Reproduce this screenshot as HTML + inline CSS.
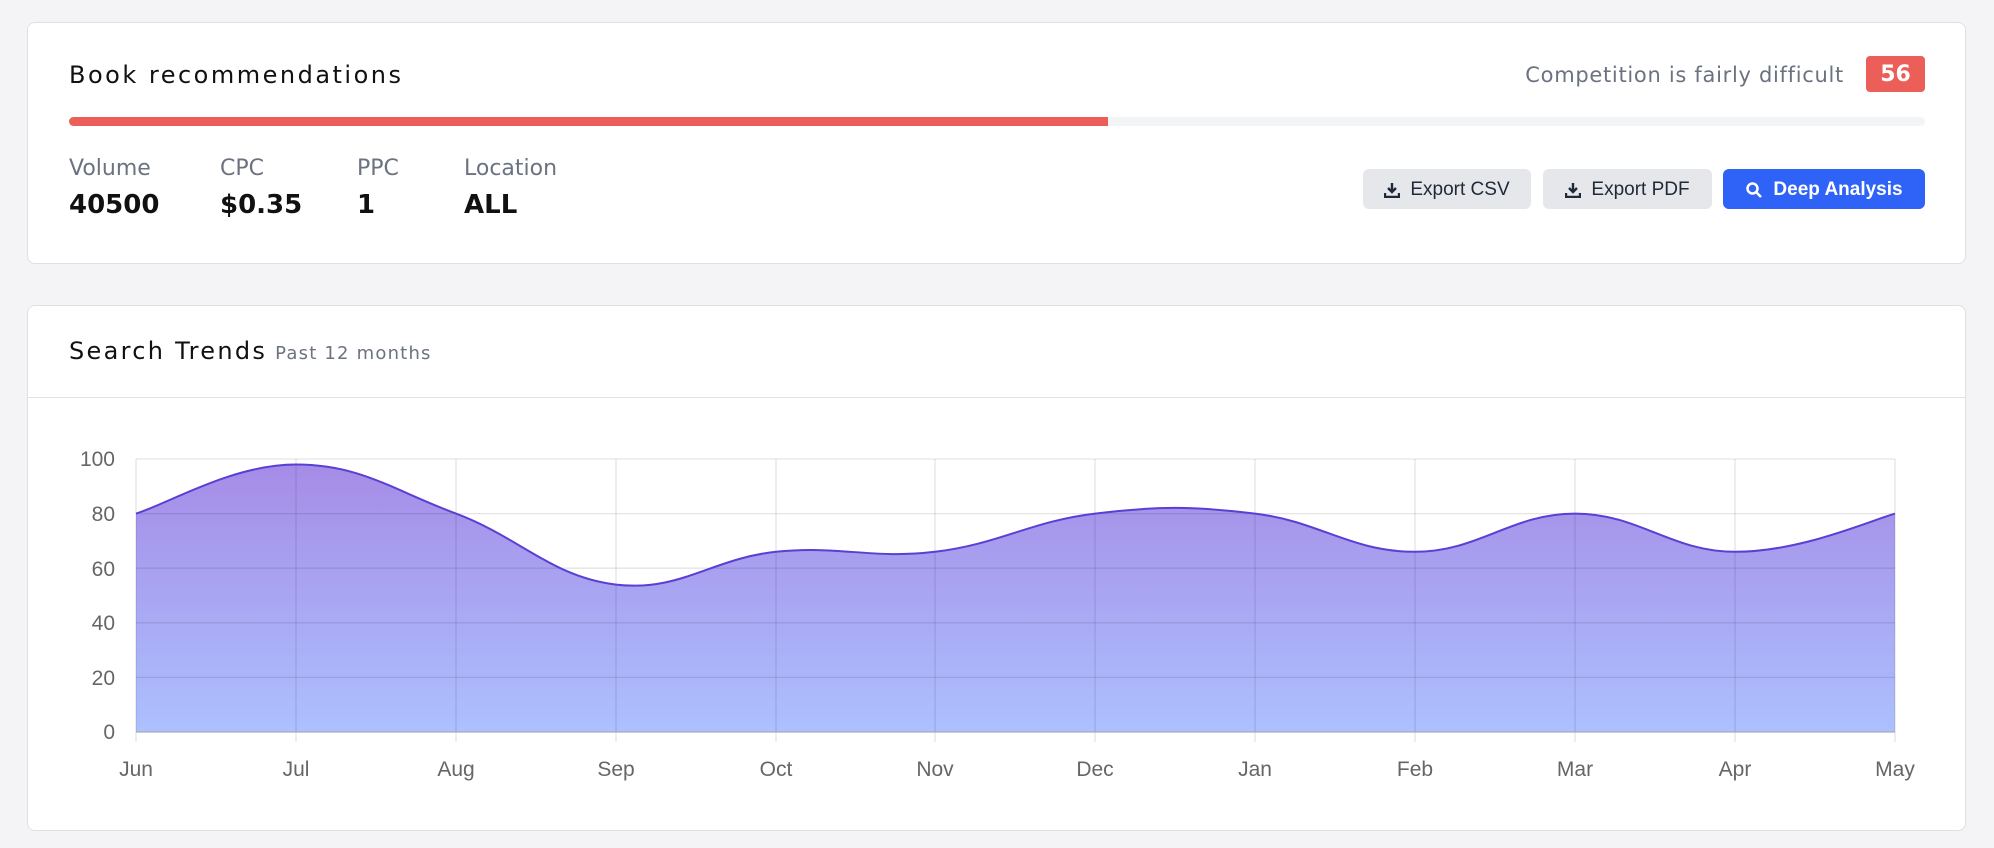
<!DOCTYPE html>
<html><head><meta charset="utf-8"><style>
body{margin:0;width:1994px;height:848px;background:#f4f4f6;font-family:"Liberation Sans",sans-serif;position:relative;overflow:hidden}
.pp{font-family:"DejaVu Sans","Liberation Sans",sans-serif}
.card{position:absolute;left:27px;width:1937px;background:#fff;border:1px solid #e0e0e4;border-radius:8px}
.abs{position:absolute}
.lab{color:#6b7280;font-size:22px;top:156px}
.val{color:#111;font-size:26px;font-weight:bold;top:190px}
.btn{position:absolute;top:169px;height:40px;border-radius:6px;background:#e5e7eb;color:#1f2937;font-size:19px;display:flex;align-items:center;justify-content:center;gap:10px}
</style></head><body>
<div class="card" style="top:22px;height:240px"></div>
<div class="abs pp" style="left:69px;top:61px;font-size:24px;color:#111;letter-spacing:2.5px">Book recommendations</div>
<div class="abs pp" style="right:150px;top:63px;font-size:21px;color:#6b7280;letter-spacing:0.7px">Competition is fairly difficult</div>
<div class="abs pp" style="left:1866px;top:56px;width:59px;height:36px;background:#ec5f58;border-radius:4px;color:#fff;font-weight:bold;font-size:22px;text-align:center;line-height:38px">56</div>
<div class="abs" style="left:69px;top:117px;width:1856px;height:9px;background:#f3f4f6;border-radius:5px"></div>
<div class="abs" style="left:69px;top:117px;width:1039px;height:9px;background:#ec5f58;border-radius:5px 0 0 5px"></div>
<div class="abs lab pp" style="left:69px">Volume</div><div class="abs val pp" style="left:69px">40500</div>
<div class="abs lab pp" style="left:220px">CPC</div><div class="abs val pp" style="left:220px">$0.35</div>
<div class="abs lab pp" style="left:357px">PPC</div><div class="abs val pp" style="left:357px">1</div>
<div class="abs lab pp" style="left:464px">Location</div><div class="abs val pp" style="left:464px">ALL</div>
<div class="btn" style="left:1363px;width:168px;padding-top:2px;box-sizing:border-box"><svg width="16" height="16" viewBox="0 0 16 16"><path d="M8 1v9M4 6l4 4 4-4M1 11v4h14v-4" stroke="#1f2937" stroke-width="2.4" fill="none"/></svg>Export CSV</div>
<div class="btn" style="left:1543px;width:169px;padding-top:2px;box-sizing:border-box"><svg width="16" height="16" viewBox="0 0 16 16"><path d="M8 1v9M4 6l4 4 4-4M1 11v4h14v-4" stroke="#1f2937" stroke-width="2.4" fill="none"/></svg>Export PDF</div>
<div class="btn" style="left:1723px;width:202px;background:#2f62f6;color:#fff;font-weight:bold;padding-top:2px;box-sizing:border-box"><svg width="18" height="18" viewBox="0 0 18 18"><circle cx="7.5" cy="7.5" r="5" stroke="#fff" stroke-width="2.5" fill="none"/><path d="M11 11l5 5" stroke="#fff" stroke-width="2.5"/></svg>Deep Analysis</div>

<div class="card" style="top:305px;height:524px"></div>
<div class="abs" style="left:27px;top:397px;width:1939px;height:1px;background:#e3e3e6"></div>
<div class="abs pp" style="left:69px;top:337px;font-size:24px;color:#111;letter-spacing:2.3px">Search Trends<span style="font-size:18px;color:#6b7280;letter-spacing:1.2px;margin-left:8px">Past 12 months</span></div>
<svg class="abs" style="left:0;top:0" width="1994" height="848">
<defs><linearGradient id="g" x1="0" y1="459" x2="0" y2="732" gradientUnits="userSpaceOnUse"><stop offset="0" stop-color="#a58be6"/><stop offset="1" stop-color="#acc0fe"/></linearGradient></defs>
<path d="M136 513.6C168 503.8 232 464.5 296 464.5C360 464.5 392 489.6 456 513.6C520 537.6 552 577 616 584.6C680 592.2 712 558.4 776 551.8C840 545.2 871 559.4 935 551.8C999 544.2 1031 521.2 1095 513.6C1159 506 1191 506 1255 513.6C1319 521.2 1351 551.8 1415 551.8C1479 551.8 1511 513.6 1575 513.6C1639 513.6 1671 551.8 1735 551.8C1799 551.8 1863 523.4 1895 513.6L1895 732L136 732Z" fill="url(#g)"/>
<g stroke="#000" stroke-opacity="0.1" stroke-width="1.3">
<path d="M136 459H1895M136 513.6H1895M136 568.2H1895M136 622.8H1895M136 677.4H1895"/>
<path d="M136 459V742M296 459V742M456 459V742M616 459V742M776 459V742M935 459V742M1095 459V742M1255 459V742M1415 459V742M1575 459V742M1735 459V742M1895 459V742"/>
</g>
<path d="M136 732H1895" stroke="#aab" stroke-width="1.3"/>
<path d="M136 513.6C168 503.8 232 464.5 296 464.5C360 464.5 392 489.6 456 513.6C520 537.6 552 577 616 584.6C680 592.2 712 558.4 776 551.8C840 545.2 871 559.4 935 551.8C999 544.2 1031 521.2 1095 513.6C1159 506 1191 506 1255 513.6C1319 521.2 1351 551.8 1415 551.8C1479 551.8 1511 513.6 1575 513.6C1639 513.6 1671 551.8 1735 551.8C1799 551.8 1863 523.4 1895 513.6" fill="none" stroke="#5a3fd4" stroke-width="2"/>
<g font-family="Liberation Sans, sans-serif" font-size="21" fill="#666" text-anchor="end">
<text x="115" y="466">100</text><text x="115" y="521">80</text><text x="115" y="576">60</text><text x="115" y="630">40</text><text x="115" y="685">20</text><text x="115" y="739">0</text>
</g>
<g font-family="Liberation Sans, sans-serif" font-size="21" fill="#666" text-anchor="middle">
<text x="136" y="776">Jun</text><text x="296" y="776">Jul</text><text x="456" y="776">Aug</text><text x="616" y="776">Sep</text><text x="776" y="776">Oct</text><text x="935" y="776">Nov</text><text x="1095" y="776">Dec</text><text x="1255" y="776">Jan</text><text x="1415" y="776">Feb</text><text x="1575" y="776">Mar</text><text x="1735" y="776">Apr</text><text x="1895" y="776">May</text>
</g>
</svg>
</body></html>
